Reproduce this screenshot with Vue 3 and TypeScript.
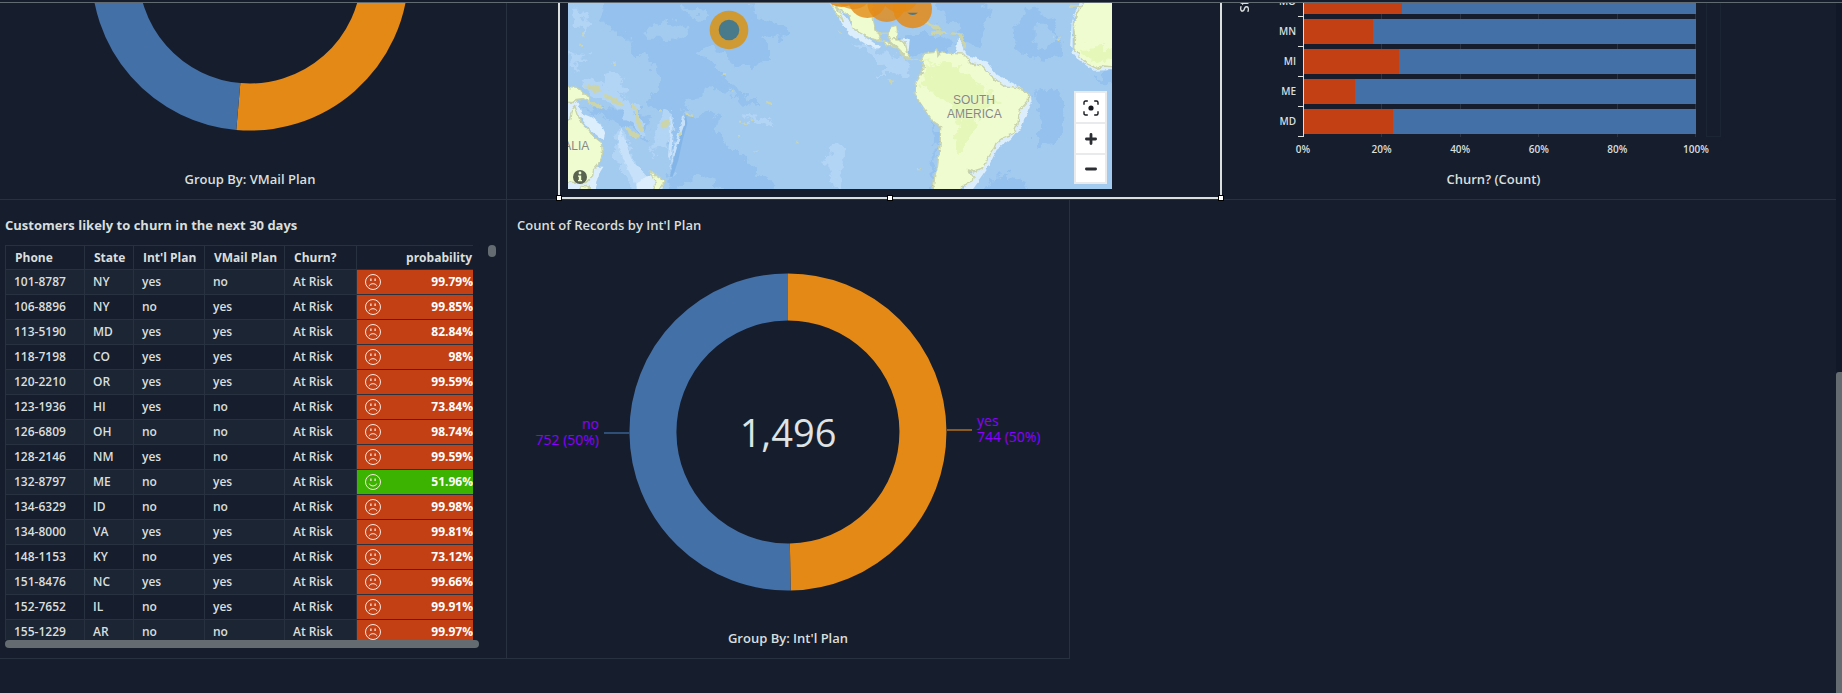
<script setup lang="ts">
interface Customer {
  phone: string
  state: string
  intl: string
  vmail: string
  probability: string
  happy?: boolean
}

interface StateBar {
  state: string
  churn: number
}

const customers: Customer[] = [
  { phone: '101-8787', state: 'NY', intl: 'yes', vmail: 'no', probability: '99.79%' },
  { phone: '106-8896', state: 'NY', intl: 'no', vmail: 'yes', probability: '99.85%' },
  { phone: '113-5190', state: 'MD', intl: 'yes', vmail: 'yes', probability: '82.84%' },
  { phone: '118-7198', state: 'CO', intl: 'yes', vmail: 'yes', probability: '98%' },
  { phone: '120-2210', state: 'OR', intl: 'yes', vmail: 'yes', probability: '99.59%' },
  { phone: '123-1936', state: 'HI', intl: 'yes', vmail: 'no', probability: '73.84%' },
  { phone: '126-6809', state: 'OH', intl: 'no', vmail: 'no', probability: '98.74%' },
  { phone: '128-2146', state: 'NM', intl: 'yes', vmail: 'no', probability: '99.59%' },
  { phone: '132-8797', state: 'ME', intl: 'no', vmail: 'yes', probability: '51.96%', happy: true },
  { phone: '134-6329', state: 'ID', intl: 'no', vmail: 'no', probability: '99.98%' },
  { phone: '134-8000', state: 'VA', intl: 'yes', vmail: 'yes', probability: '99.81%' },
  { phone: '148-1153', state: 'KY', intl: 'no', vmail: 'yes', probability: '73.12%' },
  { phone: '151-8476', state: 'NC', intl: 'yes', vmail: 'yes', probability: '99.66%' },
  { phone: '152-7652', state: 'IL', intl: 'no', vmail: 'yes', probability: '99.91%' },
  { phone: '155-1229', state: 'AR', intl: 'no', vmail: 'no', probability: '99.97%' },
]

const stateBars: StateBar[] = [
  { state: 'MO', churn: 25.1 },
  { state: 'MN', churn: 17.7 },
  { state: 'MI', churn: 24.2 },
  { state: 'ME', churn: 13 },
  { state: 'MD', churn: 22.6 },
]

const axisTicks: number[] = [0, 20, 40, 60, 80, 100]

// Arc between two fractions of a full turn, clockwise from twelve o'clock.
function arc(cx: number, cy: number, r: number, from: number, to: number): string {
  const point = (f: number) => {
    const a = f * 2 * Math.PI
    return `${(cx + r * Math.sin(a)).toFixed(2)} ${(cy - r * Math.cos(a)).toFixed(2)}`
  }
  const large = to - from > 0.5 ? 1 : 0
  return `M${point(from)}A${r} ${r} 0 ${large} 1 ${point(to)}`
}

const vmailShare = 0.5138
const intlShare = 744 / 1496
</script>

<template>
  <div class="app">
    <div class="topline"></div>
    <div class="view">
      <main class="sheet">
        <div class="row row-top">
          <section class="panel vmail">
            <svg class="half-donut" viewBox="0 0 318 128" role="img" aria-label="Records by VMail Plan">
              <path class="arc orange" :d="arc(159, -31, 135, 0, vmailShare)" />
              <path class="arc blue" :d="arc(159, -31, 135, vmailShare, 1)" />
            </svg>
            <p class="caption">Group By: VMail Plan</p>
          </section>

          <section class="map-panel">
            <div class="map">
              <svg class="map-art" viewBox="84 9 1632 558" preserveAspectRatio="xMidYMid slice" role="img" aria-label="Churn by location">
                <defs>
                  <filter id="rough" x="-5%" y="-5%" width="110%" height="110%">
                    <feTurbulence type="fractalNoise" baseFrequency="0.03" numOctaves="4" seed="4" result="n" />
                    <feDisplacementMap in="SourceGraphic" in2="n" scale="55" xChannelSelector="R" yChannelSelector="G" />
                  </filter>
                  <filter id="coast" x="-5%" y="-5%" width="110%" height="110%">
                    <feTurbulence type="fractalNoise" baseFrequency="0.06" numOctaves="3" seed="8" result="n" />
                    <feDisplacementMap in="SourceGraphic" in2="n" scale="14" xChannelSelector="R" yChannelSelector="G" />
                  </filter>
                </defs>
                <rect x="84" y="9" width="1632" height="558" fill="#a3cbf0" />
                <g filter="url(#rough)">
                  <g fill="#94c1ed">
                    <path d="M180 -20H640L648 50L700 66L760 96L720 112L660 118L690 150L690 180L650 190L640 205L600 200L560 170L520 150L480 155L500 190L540 215L560 250L600 275L640 300L650 315L600 310L570 275L530 268L490 262L480 295L440 300L430 330L470 350L510 330L540 350L530 390L550 430L600 460L640 500L690 540L720 600H560L520 540L470 520L440 540L400 600H380L400 500L400 430L380 350L320 310L350 270L360 240L330 190L280 150L270 110L220 100L180 60Z" />
                    <path d="M1345 -20H1190L1205 60L1250 70L1270 130L1320 140L1330 75L1345 40Z" />
                    <path d="M1460 20L1540 50L1560 110L1570 170L1530 178L1460 170L1425 140L1420 90L1440 60Z" />
                    <path d="M1500 260L1550 270L1575 310L1570 400L1540 430L1490 450L1485 400L1510 370L1490 320Z" />
                    <path d="M1340 540L1400 530L1460 550L1470 600H1320ZM1660 230L1740 210V250L1690 250Z" />
                    <path d="M130 325L260 330L330 340L320 420L250 380L180 350Z" />
                    <path d="M1175 370L1205 395L1198 450L1190 520L1175 600H1165L1190 450Z" />
                    <path d="M1060 120L1110 105L1190 105L1240 120L1240 150L1100 165Z" />
                  </g>
                  <g fill="#a3cbf0">
                    <path d="M1475 75L1510 70L1560 110L1500 145L1475 130ZM60 -10H180L190 90L130 100L60 60Z" />
                    <path d="M310 95L370 65L450 90L440 115L390 120L360 110L320 110ZM420 20L500 30L510 55L450 50Z" />
                  </g>
                  <g fill="#b3d5f5">
                    <path d="M100 20L125 20L138 60L135 110L115 80L100 60ZM84 155L150 170L155 180L110 180L105 225L97 210L90 180Z" />
                    <path d="M190 220L225 205L245 240L270 280L230 275L195 260ZM110 245L170 245L250 290L290 330L330 400L300 410L250 330L150 280Z" />
                    <path d="M230 385L260 400L270 450L290 510L310 540L290 600L245 510L228 480Z" />
                    <path d="M370 330L395 340L400 380L385 440L330 460L350 400Z" />
                    <path d="M870 440L895 430L925 465L905 500L910 567H885L865 500ZM600 345L690 355L700 378L650 370Z" />
                    <path d="M930 120L1020 150L1110 190L1100 240L1060 225L1000 225L1060 205L1000 170Z" />
                  </g>
                </g>
                <path d="M390 530L395 500L412 440L425 390L438 345L442 370L428 420L415 480L398 530Z" fill="#84b5e8" />
                <g fill="#c6e1f9" filter="url(#coast)">
                  <path d="M388 350L396 360L396 440L392 480L384 470L390 400ZM430 345L438 360L420 410L400 480L390 510L400 450L420 380Z" />
                  <path d="M240 380L255 420L275 480L330 540L350 580H300L260 500L235 440Z" />
                </g>
                <g fill="#dceefc" filter="url(#coast)">
                  <path d="M70 300L110 300L125 340L150 350L180 370L195 400L190 420L150 390L120 350L70 390ZM70 500H190L178 520L165 580H70Z" />
                  <path d="M290 545L330 525L370 550L365 580H290Z" />
                  <path d="M860 -5L885 9L950 95L1020 140L1010 150L930 105Z" />
                  <path d="M1255 108L1280 165L1340 185L1370 225L1420 250L1470 285L1472 310L1445 380L1420 410L1370 450L1340 510L1290 580H1260L1340 440L1440 330L1300 190L1245 165Z" />
                  <path d="M1080 120L1110 115L1105 160L1085 150ZM1596 60L1640 -5H1625L1598 55V160L1610 175L1660 212L1736 210V200L1660 200L1590 140Z" />
                </g>
                <g fill="#effccf" stroke="#c9d3ac" stroke-width="4" stroke-linejoin="round" filter="url(#coast)">
                  <path d="M70 258L108 262L125 273L144 292L152 310L130 296L112 298L100 308L70 305Z" />
                  <path d="M70 375L92 360L98 325L104 316L112 340L120 365L145 390L160 410L184 430L188 460L176 490L160 510L158 530L140 548L110 548L70 545Z" />
                  <path d="M120 556L148 558V585L120 585ZM330 512L346 526L374 544L364 560L350 585L338 560L350 545L334 525Z" />
                  <path d="M866 -5L890 40L910 62L902 40L888 20L930 50L938 80L958 98L990 115L1014 120L1040 124L1072 145L1090 165L1100 178L1130 178L1145 178L1153 160L1180 158L1190 150L1194 168L1205 155L1230 160L1270 162L1296 192L1328 198L1350 224L1376 245L1395 258L1430 262L1466 280L1465 302L1438 332L1434 370L1420 402L1390 412L1368 430L1360 450L1340 480L1325 508L1302 516L1282 510L1302 532L1300 542L1265 555L1262 585H1178L1184 530L1192 500L1200 440L1202 380L1178 362L1155 330L1125 285L1126 250L1146 220L1152 185L1130 175L1110 180L1090 168L1075 148L1046 136L1022 122L1014 102L1045 98L1055 80L1070 76L1072 90L1070 115L1055 116L1074 120L1096 128L1100 150L1110 176L1100 172L1080 150L1050 122L1040 96L1010 98L1000 60L1000 -5Z" />
                  <path d="M1744 -5H1640L1610 40L1600 75L1604 110L1601 145L1625 175L1642 192L1670 205L1690 198L1744 202Z" />
                </g>
                <g fill="#e5f7b9" filter="url(#rough)">
                  <path d="M1165 180L1200 195L1250 195L1285 215L1310 260L1360 280L1370 310L1340 310L1310 350L1300 390L1280 440L1260 460L1240 420L1265 370L1240 330L1200 290L1185 285L1150 265L1165 215Z" />
                  <path d="M1620 140L1650 140L1740 135V170L1680 185L1640 175Z" />
                </g>
                <g fill="#ccd5a9" filter="url(#coast)">
                  <path d="M130 255L150 252L175 262L185 275L165 278L145 262L130 260ZM190 278L215 290L245 305L255 318L232 315L205 300L190 288ZM150 302L170 308L195 322L180 326L158 318L145 312ZM275 314L292 320L298 360L310 395L300 395L285 360L285 330ZM256 375L275 390L298 405L290 416L268 405ZM362 365L388 358L386 375L370 387L362 380ZM436 340L458 344L452 350L436 346ZM678 302L692 308L694 320L680 312Z" />
                  <path d="M124 92L131 100L130 112L124 106ZM118 134H126V140H118ZM218 184H224V192H218ZM548 222H556V228H548ZM566 265L578 274L572 276ZM596 362H604V368H596ZM606 369L618 372L614 378ZM644 455L656 450L650 458ZM766 422H772V430H766ZM418 396H426V406H418ZM592 408H600V413H592ZM632 358H640V363H632ZM360 328H366V335H360ZM895 94L904 98L900 101ZM1041 238L1060 242L1054 252ZM1535 105L1545 110L1540 115ZM1548 120L1560 108L1557 128ZM1134 504H1142V508H1134Z" />
                  <path d="M1135 60L1165 66L1195 78L1208 90L1180 88L1160 70L1135 66ZM1175 94L1215 94L1225 100L1190 106L1170 100ZM1232 97L1265 100L1272 120L1282 145L1272 145L1262 118L1252 104L1235 104ZM1590 14L1624 16V22L1590 24Z" />
                </g>
                <path d="M1001 50L1040 55L1075 62L1055 76L1047 96Q1020 102 1006 88Z" fill="#9fc9f0" />
                <g class="place">
                  <text x="1302" y="311" text-anchor="middle">SOUTH</text>
                  <text x="1303" y="353" text-anchor="middle">AMERICA</text>
                  <text x="148" y="449" text-anchor="end">AUSTRALIA</text>
                </g>
                <g fill="#e48a15">
                  <circle cx="567" cy="90" r="58" fill="#cf9a33" />
                  <circle cx="905" cy="-37" r="58" opacity="0.9" />
                  <circle cx="940" cy="-30" r="58" opacity="0.7" />
                  <circle cx="982" cy="-4" r="58" opacity="0.8" />
                  <circle cx="1040" cy="8" r="58" opacity="0.8" />
                  <circle cx="1080" cy="-20" r="58" opacity="0.8" />
                  <circle cx="1118" cy="27" r="58" opacity="0.85" />
                </g>
                <circle cx="567" cy="90" r="31" fill="#497a8c" />
                <path d="M1102 38Q1118 52 1134 38Z" fill="#497a8c" />
              </svg>
              <button class="info" type="button" aria-label="Map information">
                <svg width="14" height="14" viewBox="0 0 14 14">
                  <circle cx="7" cy="7" r="7" fill="#5a634f" />
                  <circle cx="7" cy="3" r="1.4" fill="#effccf" />
                  <path d="M5 5.4H8.2V10H9V11.3H5V10H5.8V6.7H5Z" fill="#effccf" />
                </svg>
              </button>
              <div class="controls">
                <button type="button" aria-label="Fit to data">
                  <svg width="16" height="16" viewBox="0 0 16 16" fill="none" stroke="#16191f" stroke-width="1.4">
                    <path d="M1 4.8V2.5Q1 1 2.5 1H4.8M11.2 1H13.5Q15 1 15 2.5V4.8M15 11.2V13.5Q15 15 13.5 15H11.2M4.8 15H2.5Q1 15 1 13.5V11.2" />
                    <circle cx="8" cy="8" r="2.6" fill="#16191f" stroke="none" />
                  </svg>
                </button>
                <button type="button" aria-label="Zoom in">
                  <svg width="16" height="16" viewBox="0 0 16 16" stroke="#2b2e33" stroke-width="2.8" stroke-linecap="round">
                    <path d="M3.4 8H12.6M8 3.4V12.6" />
                  </svg>
                </button>
                <button type="button" aria-label="Zoom out">
                  <svg width="16" height="16" viewBox="0 0 16 16" stroke="#2b2e33" stroke-width="2.8" stroke-linecap="round">
                    <path d="M3.4 8H12.6" />
                  </svg>
                </button>
              </div>
            </div>
            <span class="handle at-left"></span>
            <span class="handle at-middle"></span>
            <span class="handle at-right"></span>
          </section>

          <section class="churn">
            <div class="chart">
              <div class="y-title"><span>State</span></div>
              <div class="y-labels">
                <span v-for="bar in stateBars" :key="bar.state">{{ bar.state }}</span>
              </div>
              <div class="plot">
                <div class="grid-lines"><i v-for="n in 5" :key="n"></i></div>
                <div v-for="bar in stateBars" :key="bar.state" class="bar-row">
                  <div class="bar"><div class="bar-risk" :style="{ width: bar.churn + '%' }"></div></div>
                </div>
              </div>
              <div class="mini-track"></div>
            </div>
            <div class="x-labels">
              <span v-for="tick in axisTicks" :key="tick">{{ tick }}%</span>
            </div>
            <p class="caption">Churn? (Count)</p>
          </section>
        </div>

        <div class="row row-bottom">
          <section class="panel customers">
            <h2 class="title strong">Customers likely to churn in the next 30 days</h2>
            <div class="table-area">
              <div class="table-clip">
                <table>
                  <colgroup>
                    <col class="c-phone" /><col class="c-state" /><col class="c-intl" />
                    <col class="c-vmail" /><col class="c-churn" /><col />
                  </colgroup>
                  <thead>
                    <tr>
                      <th>Phone</th>
                      <th>State</th>
                      <th>Int'l Plan</th>
                      <th>VMail Plan</th>
                      <th>Churn?</th>
                      <th class="right">probability</th>
                    </tr>
                  </thead>
                  <tbody>
                    <tr v-for="c in customers" :key="c.phone">
                      <td>{{ c.phone }}</td>
                      <td>{{ c.state }}</td>
                      <td>{{ c.intl }}</td>
                      <td>{{ c.vmail }}</td>
                      <td>At Risk</td>
                      <td class="score" :class="{ happy: c.happy }">
                        <div class="score-line">
                          <svg width="16" height="16" viewBox="0 0 16 16" fill="none" stroke="#fbe9e0" stroke-width="1">
                            <circle cx="8" cy="8" r="7.5" />
                            <path d="M5.9 4.4V7M10.1 4.4V7" stroke-width="1.3" />
                            <path v-if="c.happy" d="M4.3 9.6Q5 12 8 12T11.7 9.6" />
                            <path v-else d="M4.4 12.2V11.4Q5 9.7 8 9.7T11.6 11.4V12.2" />
                          </svg>
                          <span>{{ c.probability }}</span>
                        </div>
                      </td>
                    </tr>
                  </tbody>
                </table>
              </div>
              <div class="v-thumb"></div>
            </div>
            <div class="h-thumb"></div>
          </section>

          <section class="panel intl">
            <h2 class="title">Count of Records by Int'l Plan</h2>
            <svg class="donut" viewBox="0 0 562 393" role="img" aria-label="Count of Records by Int'l Plan">
              <path class="arc orange" :d="arc(281, 197, 135, 0, intlShare)" />
              <path class="arc blue" :d="arc(281, 197, 135, intlShare, 1)" />
              <path d="M97 198H123" stroke="#2e4f78" stroke-width="2" />
              <path d="M440 195H465" stroke="#8a5a1e" stroke-width="2" />
              <text class="total" x="281" y="212" text-anchor="middle">1,496</text>
              <g class="slice-label">
                <text x="92" y="194" text-anchor="end">no</text>
                <text x="92" y="210" text-anchor="end">752 (50%)</text>
                <text x="470" y="191">yes</text>
                <text x="470" y="207">744 (50%)</text>
              </g>
            </svg>
            <p class="caption">Group By: Int'l Plan</p>
          </section>
        </div>
      </main>
      <div class="scroll-track"><div class="scroll-thumb"></div></div>
    </div>
  </div>
</template>

<style>
body {
  margin: 0;
  background: #161e2d;
}
</style>

<style scoped>
.app {
  display: flex;
  flex-direction: column;
  min-height: 100vh;
  background: #161e2d;
  color: #d9dede;
  font-family: "Open Sans", "Noto Sans", sans-serif;
  font-size: 12px;
}
.app *,
.app *::before {
  box-sizing: border-box;
}
.topline {
  height: 3px;
  border-bottom: 1px solid #626a71;
}
.view {
  flex: 1;
  display: flex;
}
.sheet {
  flex: 1;
  min-width: 0;
}
.scroll-track {
  width: 6px;
  background: #111827;
  display: flex;
  flex-direction: column;
  justify-content: flex-end;
}
.scroll-thumb {
  height: 321px;
  border-radius: 3px 0 0 0;
  background: #646c72;
}
.row {
  display: grid;
}
.row-top {
  grid-template-columns: 507fr 51fr 664fr 614fr;
  border-bottom: 1px solid #27313f;
}
.row-bottom {
  grid-template-columns: 507fr 563fr 766fr;
}
.panel {
  border-right: 1px solid #27313f;
  display: flex;
  flex-direction: column;
}
.row-bottom .panel {
  border-bottom: 1px solid #27313f;
}
.caption {
  margin: 0;
  font-size: 13px;
  font-weight: 600;
  line-height: 20px;
  text-align: center;
}
.title {
  margin: 0;
  padding: 15px 10px 0;
  font-size: 13px;
  font-weight: 600;
  line-height: 20px;
}
.title.strong {
  padding-left: 5px;
  font-weight: 700;
}
.arc {
  fill: none;
  stroke-width: 47;
}
.arc.orange {
  stroke: #e48916;
}
.arc.blue {
  stroke: #4470a8;
}

.vmail {
  align-items: center;
  padding-right: 6px;
}
.half-donut {
  width: 318px;
  height: 128px;
  margin-bottom: 38px;
}

.map-panel {
  grid-column: 3;
  position: relative;
  height: 196px;
  padding: 0 108px 8px 8px;
  border: 2px solid #dcdfe0;
  border-top: 0;
}
.map {
  position: relative;
  height: 186px;
  overflow: hidden;
}
.map-art {
  display: block;
  width: 100%;
  height: 100%;
}
.place {
  font-family: "Liberation Sans", Arial, sans-serif;
  font-size: 36px;
  fill: #85897c;
  stroke: #f6fbe6;
  stroke-width: 2px;
  paint-order: stroke;
}
.info {
  position: absolute;
  left: 5px;
  bottom: 5px;
  width: 14px;
  height: 14px;
  padding: 0;
  border: 0;
  background: none;
}
.info svg {
  display: block;
}
.controls {
  position: absolute;
  right: 5px;
  bottom: 5px;
  width: 33px;
  padding: 2px;
  display: flex;
  flex-direction: column;
  gap: 2px;
  background: #e9eaeb;
}
.controls button {
  height: 29px;
  padding: 0;
  border: 0;
  background: #fff;
  display: grid;
  place-items: center;
}
.controls button:last-child {
  height: 27px;
}
.handle {
  position: absolute;
  bottom: -4px;
  width: 6px;
  height: 6px;
  background: #fff;
  border: 1px solid #000;
  z-index: 1;
}
.at-left {
  left: -4px;
}
.at-middle {
  left: calc(50% - 3px);
}
.at-right {
  right: -4px;
}

.churn {
  overflow: hidden;
}
.chart {
  display: grid;
  grid-template-columns: 12px 46px 1fr 15px;
  padding: 0 115px 0 16px;
  height: 134px;
}
.y-title {
  height: 9px;
  display: flex;
  align-items: flex-end;
  font-size: 13px;
  font-weight: 600;
  line-height: 12px;
}
.y-title span {
  writing-mode: vertical-rl;
  transform: rotate(180deg);
}
.y-labels,
.plot {
  height: 134px;
  display: flex;
  flex-direction: column;
  justify-content: flex-end;
}
.y-labels {
  font-size: 10px;
  font-weight: 600;
  text-align: right;
  overflow: hidden;
}
.y-labels span {
  flex: none;
  height: 30px;
  line-height: 28px;
}
.plot {
  position: relative;
  margin: 0 10px 0 1px;
  padding-left: 6px;
  overflow: hidden;
}
.bar-row {
  position: relative;
  flex: none;
  height: 30px;
  padding: 2px 0 3px;
  border-left: 1px solid #d9dede;
}
.bar-row::before {
  content: "";
  position: absolute;
  left: -6px;
  bottom: 0;
  width: 6px;
  height: 1px;
  background: #d9dede;
}
.bar {
  height: 25px;
  background: #4470a8;
}
.bar-risk {
  height: 100%;
  background: #c33f14;
}
.grid-lines {
  position: absolute;
  inset: 0 0 0 7px;
  display: grid;
  grid-template-columns: repeat(5, 1fr);
}
.grid-lines i {
  border-right: 1px solid #2a3443;
}
.mini-track {
  border: 1px solid #1b2534;
  border-top: 0;
}
.x-labels {
  display: flex;
  justify-content: space-between;
  padding: 0 120px 0 61px;
  font-size: 10px;
  font-weight: 600;
  line-height: 24px;
}
.x-labels span {
  width: 40px;
  text-align: center;
}
.churn .caption {
  padding: 8px 140px 0 69px;
}

.customers {
  padding-bottom: 10px;
}
.table-area {
  display: flex;
  gap: 15px;
  padding: 10px 10px 0 5px;
}
.table-clip {
  flex: 1;
  height: 395px;
  overflow: hidden;
}
table {
  width: 100%;
  table-layout: fixed;
  border-collapse: separate;
  border-spacing: 0;
  border-top: 1px solid #27313f;
  border-left: 1px solid #27313f;
}
.c-phone {
  width: 79px;
}
.c-state {
  width: 49px;
}
.c-intl {
  width: 71px;
}
.c-vmail {
  width: 80px;
}
.c-churn {
  width: 72px;
}
th,
td {
  height: 25px;
  padding: 0 0 0 8px;
  border-right: 1px solid #27313f;
  border-bottom: 1px solid #27313f;
  font-size: 12px;
  font-weight: 600;
  line-height: 20px;
  text-align: left;
  white-space: nowrap;
}
th {
  height: 24px;
  padding-left: 9px;
  font-weight: 700;
}
th:last-child,
td:last-child {
  border-right: 0;
}
th.right {
  padding-right: 1px;
  text-align: right;
}
tbody tr:nth-child(odd) {
  background: #1c2534;
}
.score {
  background: #c33f14;
  color: #fff;
  font-weight: 700;
}
.score.happy {
  background: #3bb300;
}
.score-line {
  display: flex;
  align-items: center;
  justify-content: space-between;
}
.v-thumb {
  width: 8px;
  height: 12px;
  border-radius: 4px;
  background: #646c72;
}
.h-thumb {
  height: 8px;
  margin: 0 27px 0 5px;
  border-radius: 4px;
  background: #646c72;
}

.intl {
  padding-bottom: 10px;
}
.donut {
  display: block;
  width: 100%;
  height: 393px;
}
.total {
  font-size: 38px;
  font-weight: 500;
  fill: #dfe3e3;
}
.slice-label {
  font-size: 14px;
  font-weight: 500;
  fill: #8c00ff;
}
</style>
